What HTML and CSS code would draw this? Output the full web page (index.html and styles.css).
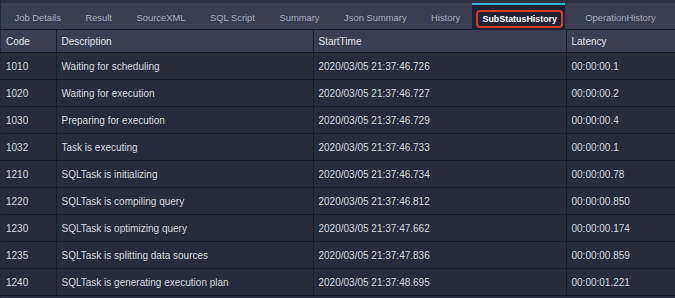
FILE: index.html
```html
<!DOCTYPE html>
<html>
<head>
<meta charset="utf-8">
<link rel="stylesheet" href="styles.css">
</head>
<body>
<div class="panel">
  <div class="tabs">
    <div class="tab">Job Details</div>
    <div class="tab">Result</div>
    <div class="tab">SourceXML</div>
    <div class="tab">SQL Script</div>
    <div class="tab">Summary</div>
    <div class="tab">Json Summary</div>
    <div class="tab">History</div>
    <div class="tab active"><span class="mark">SubStatusHistory</span></div>
    <div class="tab next">OperationHistory</div>
  </div>
  <table class="grid">
    <colgroup>
      <col class="c-code"><col class="c-desc"><col class="c-start"><col class="c-lat">
    </colgroup>
    <thead>
      <tr><th>Code</th><th>Description</th><th>StartTime</th><th>Latency</th></tr>
    </thead>
    <tbody>
      <tr><td>1010</td><td>Waiting for scheduling</td><td>2020/03/05 21:37:46.726</td><td>00:00:00.1</td></tr>
      <tr><td>1020</td><td>Waiting for execution</td><td>2020/03/05 21:37:46.727</td><td>00:00:00.2</td></tr>
      <tr><td>1030</td><td>Preparing for execution</td><td>2020/03/05 21:37:46.729</td><td>00:00:00.4</td></tr>
      <tr><td>1032</td><td>Task is executing</td><td>2020/03/05 21:37:46.733</td><td>00:00:00.1</td></tr>
      <tr><td>1210</td><td>SQLTask is initializing</td><td>2020/03/05 21:37:46.734</td><td>00:00:00.78</td></tr>
      <tr><td>1220</td><td>SQLTask is compiling query</td><td>2020/03/05 21:37:46.812</td><td>00:00:00.850</td></tr>
      <tr><td>1230</td><td>SQLTask is optimizing query</td><td>2020/03/05 21:37:47.662</td><td>00:00:00.174</td></tr>
      <tr><td>1235</td><td>SQLTask is splitting data sources</td><td>2020/03/05 21:37:47.836</td><td>00:00:00.859</td></tr>
      <tr><td>1240</td><td>SQLTask is generating execution plan</td><td>2020/03/05 21:37:48.695</td><td>00:00:01.221</td></tr>
    </tbody>
  </table>
</div>
</body>
</html>
```

FILE: styles.css
```css
html, body {
  margin: 0;
  padding: 0;
  background: #2c3041;
  font-family: "Liberation Sans", Arial, sans-serif;
  overflow: hidden;
}
.panel {
  width: 675px;
  height: 298px;
  padding-top: 3px;
  box-sizing: border-box;
  border-left: 1px solid #262a38;
}
.tabs {
  display: flex;
  align-items: stretch;
  height: 26px;
  background: #3a3e51;
}
.tab {
  display: flex;
  align-items: center;
  padding: 0 12px 0 12.5px;
  font-size: 9.4px;
  color: #a9adb9;
  white-space: nowrap;
  box-sizing: border-box;
  border-top: 2px solid transparent;
}
.tab:first-child {
  padding-left: 13.5px;
}
.tab.active {
  background: #1f2331;
  border-top: 2px solid #3ab3d3;
  padding: 0 2px 0 4px;
  width: 93px;
}
.mark {
  display: flex;
  align-items: center;
  justify-content: center;
  width: 87px;
  height: 18px;
  margin-top: 4px;
  box-sizing: border-box;
  border: 2px solid #d8362c;
  border-radius: 4px;
  color: #ffffff;
  font-weight: bold;
  font-size: 8.9px;
}
.tab.next {
  padding-left: 20px;
}
.grid {
  width: 674px;
  border-collapse: collapse;
  table-layout: fixed;
  font-size: 10px;
}
.c-code { width: 55px; }
.c-desc { width: 257px; }
.c-start { width: 253px; }
.c-lat { width: auto; }
.grid th {
  background: #3a3e51;
  color: #e2e4e9;
  font-weight: normal;
  text-align: left;
  height: 22px;
  padding: 0 5px;
  border: 1px solid #1a1d28;
  border-left: none;
  font-size: 10px;
}
.grid td {
  background: #272b3a;
  color: #d8dade;
  height: 26px;
  padding: 0 5px;
  border: 1px solid #1a1d28;
  border-left: none;
  white-space: nowrap;
}
.grid th:last-child, .grid td:last-child {
  border-right: none;
}
```
